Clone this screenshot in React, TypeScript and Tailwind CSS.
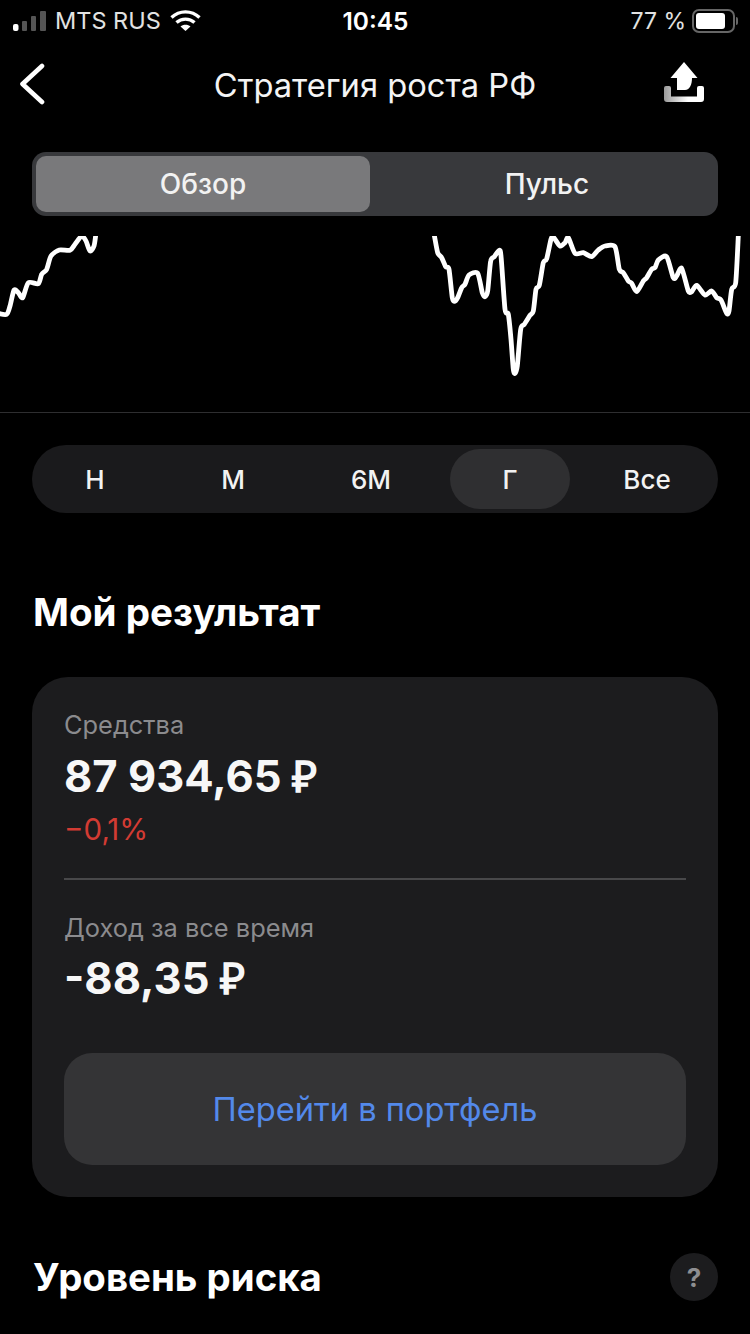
const F = { fontFamily: 'Inter, "Liberation Sans", sans-serif' };

const leftPts: number[][] = [[-6,262],[20,265],[30,240],[42,192],[55,200],[68,215],[85,170],[115,173],[125,145],[140,130],[153,90],[178,72],[210,73],[225,55],[245,30],[258,45],[270,75],[282,60],[287,28]].map(([x,y])=>[x/3,y/3+225]);
const rightPts: number[][] = [[28,28],[38,80],[50,95],[62,122],[72,130],[82,215],[90,226],[98,215],[110,185],[120,175],[132,147],[158,142],[172,200],[180,212],[188,195],[197,105],[208,92],[222,73],[228,90],[240,250],[250,265],[258,340],[265,430],[270,442],[277,420],[287,310],[298,295],[315,268],[325,255],[333,190],[343,178],[355,110],[365,98],[378,40],[385,33],[405,60],[420,50],[430,35],[450,82],[475,80],[500,92],[520,72],[540,60],[570,62],[583,130],[595,140],[610,165],[620,172],[635,197],[655,165],[665,155],[680,130],[690,125],[700,102],[725,92],[745,155],[755,150],[770,127],[790,195],[800,197],[815,178],[840,207],[860,195],[875,215],[888,222],[905,262],[912,255],[920,190],[932,170],[940,30]].map(([x,y])=>[x/3+425,y/3+225]);

function smooth(p: number[][]) {
  let d = `M${p[0][0].toFixed(1)} ${p[0][1].toFixed(1)}`;
  for (let i = 0; i < p.length - 1; i++) {
    const a = p[Math.max(i - 1, 0)], b = p[i], c = p[i + 1], e = p[Math.min(i + 2, p.length - 1)];
    const c1 = [b[0] + (c[0] - a[0]) / 8, b[1] + (c[1] - a[1]) / 8];
    const c2 = [c[0] - (e[0] - b[0]) / 8, c[1] - (e[1] - b[1]) / 8];
    d += `C${c1[0].toFixed(1)} ${c1[1].toFixed(1)} ${c2[0].toFixed(1)} ${c2[1].toFixed(1)} ${c[0].toFixed(1)} ${c[1].toFixed(1)}`;
  }
  return d;
}

function StatusBar() {
  return (
    <div className="flex h-[42px] items-center justify-between pl-[13px] pr-[12px] text-white">
      <div className="flex w-[220px] items-center">
        <svg width="34" height="20" viewBox="0 0 34 20">
          <rect x="0" y="13" width="5.5" height="7" rx="2" fill="#fff" />
          <rect x="9" y="10" width="5" height="10" rx="1" fill="#555" />
          <rect x="18" y="5" width="5" height="15" rx="1" fill="#555" />
          <rect x="27" y="0" width="6" height="20" rx="1" fill="#555" />
        </svg>
        <span className="ml-[8px] text-[23.5px] leading-none font-normal text-[#e2e2e2]">MTS RUS</span>
        <svg className="ml-[9px]" width="31" height="22" viewBox="0 0 31 22" fill="none" stroke="#fff" strokeWidth="3.4">
          <path d="M1.5 7.5C9.5 0 21.5 0 29.5 7.5" />
          <path d="M6.5 12.5C11.5 8 19.5 8 24.5 12.5" />
          <path d="M15.5 21L10.5 16.5C13 14 18 14 20.5 16.5Z" fill="#fff" stroke="none" />
        </svg>
      </div>
      <span className="text-[24.5px] leading-none font-semibold text-white">10:45</span>
      <div className="flex w-[220px] items-center justify-end">
        <span className="mr-[6px] text-[23px] leading-none font-normal text-[#e2e2e2]">77 %</span>
        <div className="flex items-center">
          <div className="flex h-[24px] w-[43px] items-center rounded-[7px] border-2 border-[#666] p-[2px]">
            <div className="h-full w-[29px] rounded-[3px] bg-white" />
          </div>
          <div className="ml-[1px] h-[8px] w-[2px] rounded-r bg-[#666]" />
        </div>
      </div>
    </div>
  );
}

function NavBar() {
  return (
    <div className="grid h-[84px] grid-cols-[1fr_auto_1fr] items-center pl-[19px] pr-[46px]">
      <svg width="26" height="42" viewBox="0 0 26 42" fill="none" stroke="#fff" strokeWidth="4.6" strokeLinecap="round" strokeLinejoin="round">
        <path d="M23 3L3.5 21L23 39" />
      </svg>
      <span className="ml-[27px] mt-[2px] text-[32.7px] leading-none text-[#f4f4f4]">Стратегия роста РФ</span>
      <svg className="justify-self-end mt-[-4px]" width="40" height="40" viewBox="0 0 40 40" fill="#fff">
        <path d="M20 0L33.5 16H28C28 22 26 28 21 28H13V16H6.5Z" />
        <path d="M0 26Q0 24 2 24H5Q7 24 7 26V34.5H33V26Q33 24 35 24H38Q40 24 40 26V37Q40 40 37 40H3Q0 40 0 37Z" fill="url(#tray)" />
        <defs>
          <linearGradient id="tray" x1="0" x2="1" y1="0" y2="0">
            <stop offset="0" stopColor="#9a9a9a" />
            <stop offset="0.6" stopColor="#ffffff" />
          </linearGradient>
        </defs>
      </svg>
    </div>
  );
}

function Chart() {
  return (
    <svg className="block" width="750" height="176" viewBox="0 235 750 176" fill="none" stroke="#fff" strokeWidth="4.8" strokeLinecap="round" strokeLinejoin="round">
      <path d={smooth(leftPts)} />
      <path d={smooth(rightPts)} />
    </svg>
  );
}

const Rub = () => <span className="font-['Liberation_Sans']">₽</span>;

export default function App() {
  return (
    <div className="h-[1334px] w-[750px] overflow-hidden bg-black" style={F}>
      <StatusBar />
      <NavBar />
      <div className="mx-[32px] mt-[26px] flex h-[64px] rounded-[14px] bg-[#38393c] p-[4px]">
        <div className="flex w-[334px] items-center justify-center rounded-[10px] bg-[#79797b] text-[28px] font-medium text-[#f2f2f2]">Обзор</div>
        <div className="flex flex-1 items-center justify-center pl-[10px] text-[28px] font-medium text-[#f2f2f2]">Пульс</div>
      </div>
      <div className="mt-[20px] border-b border-[#2e2e30]">
        <Chart />
      </div>
      <div className="mx-[32px] mt-[32px] h-[68px] rounded-[34px] bg-[#1a1a1c] py-[4px]">
        <div className="ml-[-6px] grid h-full w-[690px] grid-cols-5 text-[26px] font-medium text-[#f2f2f2]">
          <div className="flex items-center justify-center">Н</div>
          <div className="flex items-center justify-center">М</div>
          <div className="flex items-center justify-center">6М</div>
          <div className="ml-[10px] mr-[8px] flex items-center justify-center rounded-[30px] bg-[#2f2f31]">Г</div>
          <div className="flex items-center justify-center">Все</div>
        </div>
      </div>
      <h2 className="mx-[33px] mt-[75px] text-[38.6px] leading-[48px] font-bold text-white">Мой результат</h2>
      <div className="mx-[32px] mt-[41px] h-[520px] rounded-[36px] bg-[#1c1c1e] px-[32px] pt-[33px]">
        <div className="text-[25.4px] leading-[30px] text-[#8b8b8e]">Средства</div>
        <div className="mt-[10px] text-[43.5px] leading-[52px] font-bold text-[#f7f7f7]">87 934,65 <Rub /></div>
        <div className="mt-[10px] text-[29.5px] leading-[32px] text-[#d23b33]">−0,1%</div>
        <div className="mt-[33px] h-[2px] bg-[#48484a]" />
        <div className="mt-[33px] text-[25.4px] leading-[30px] text-[#8b8b8e]">Доход за все время</div>
        <div className="mt-[9px] text-[43.5px] leading-[52px] font-bold text-[#f7f7f7]">-88,35 <Rub /></div>
        <div className="mt-[48px] flex h-[112px] items-center justify-center rounded-[28px] bg-[#343436] text-[32.6px] text-[#5389ea]">Перейти в портфель</div>
      </div>
      <div className="mx-[32px] mt-[56px] flex items-center justify-between">
        <h2 className="ml-[1px] text-[38.4px] leading-[48px] font-bold text-white">Уровень риска</h2>
        <div className="flex h-[48px] w-[48px] items-center justify-center rounded-full bg-[#1c1c1e] text-[26px] font-bold text-[#8e8e91]">?</div>
      </div>
    </div>
  );
}
